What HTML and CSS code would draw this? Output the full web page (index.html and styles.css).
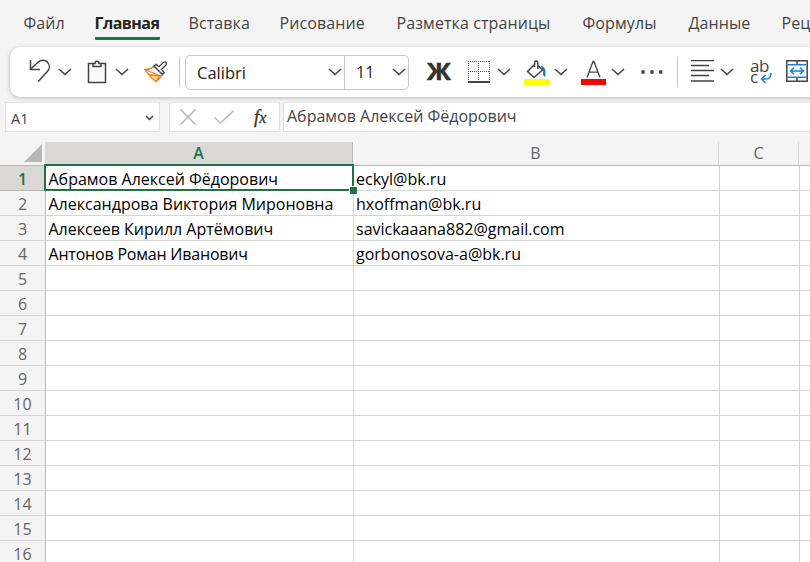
FILE: index.html
```html
<!DOCTYPE html>
<html lang="ru">
<head>
<meta charset="utf-8">
<title>Excel</title>
<link rel="stylesheet" href="styles.css">
</head>
<body>
<div class="app">
  <nav class="tabs">
    <span>Файл</span><span><b>Главная</b></span><span>Вставка</span><span>Рисование</span><span>Разметка страницы</span><span>Формулы</span><span>Данные</span><span>Рецензирование</span>
  </nav>

  <div class="ribbon">
    <svg class="undo" width="22" height="24" viewBox="0 0 22 24"><path d="M1.500 1v9.500H11M1.800 10 9 3.300C12 .6 16 .6 18.500 3.200c2.700 2.800 2.300 6.600-.2 9.300L9.200 22.500"/></svg>
    <svg class="chev" width="14" height="8" viewBox="0 0 14 8"><path d="m1 1 6 5.500L13 1"/></svg>
    <svg class="clip" width="20" height="24" viewBox="0 0 20 24"><path class="paper" d="M6 3.500H1.500v19h17v-19H14"/><path d="M6 6.500v-3h2C8 .5 12 .5 12 3.500h2v3z"/></svg>
    <svg class="chev" width="14" height="8" viewBox="0 0 14 8"><path d="m1 1 6 5.500L13 1"/></svg>
    <svg class="brush" width="24" height="22" viewBox="0 0 24 22"><path class="bristle" d="M1 8.500c4 .2 7-1 9-3.500l8.500 8.500c-1.500 2.500-3.500 5-6.500 7C9 18 4 14 1 8.500Z"/><path class="gold" d="m5 13.500 11 1.500-4 5.500C9 18.500 7 16.500 5 13.500Z"/><path class="edge" d="M1 8.500 16.500 15"/><path d="m10 5 8.500 8.500 1.700-2-2.700-3.300 4.500-4.200c1.300-2-.7-4-2.700-2.500L15 5.700l-3-2.500Z"/></svg>
    <i class="rule"></i>
    <div class="font-box">
      <div class="font-name"><span>Calibri</span><svg class="chev" width="14" height="8" viewBox="0 0 14 8"><path d="m1 1 6 5.500L13 1"/></svg></div>
      <div class="font-size"><span>11</span><svg class="chev" width="14" height="8" viewBox="0 0 14 8"><path d="m1 1 6 5.500L13 1"/></svg></div>
    </div>
    <b class="bold">Ж</b>
    <svg class="borders" width="22" height="22" viewBox="0 0 22 22"><path class="dots" d="M0 .5h22M0 10.500h22M.5 0v19M10.500 0v19M21.500 0v19"/><path class="base" d="M0 21h22"/></svg>
    <svg class="chev" width="14" height="8" viewBox="0 0 14 8"><path d="m1 1 6 5.500L13 1"/></svg>
    <svg class="fill" width="26" height="26" viewBox="0 0 26 26"><path fill="#ff0" stroke="none" d="M0 19h26v6H0z"/><path d="m11 4-7.500 7.500 6.500 6 8.500-7.500L13.500 5M10.500 7V3.500c0-3.300 3.300-3.300 3.300 0V9"/><path fill="#1a76bd" stroke="none" d="M16.500 6c4.500.2 5.800 4 4.700 11-2-1-2.600-3.500-2-6.500Z"/></svg>
    <svg class="chev" width="14" height="8" viewBox="0 0 14 8"><path d="m1 1 6 5.500L13 1"/></svg>
    <svg class="color" width="25" height="26" viewBox="0 0 25 26"><path fill="red" stroke="none" d="M0 19h25v6H0z"/><path d="m6 17.500 6-16h1l6 16M8 12.200h9"/></svg>
    <svg class="chev" width="14" height="8" viewBox="0 0 14 8"><path d="m1 1 6 5.500L13 1"/></svg>
    <svg class="more" width="22" height="4" viewBox="0 0 22 4"><circle cx="2" cy="2" r="1.900"/><circle cx="11" cy="2" r="1.900"/><circle cx="19.700" cy="2" r="1.900"/></svg>
    <i class="rule"></i>
    <svg class="align" width="24" height="22" viewBox="0 0 24 22"><path d="M0 .5h23M0 5.500h18M0 10.500h23M0 15.500h18M0 21h23"/></svg>
    <svg class="chev" width="14" height="8" viewBox="0 0 14 8"><path d="m1 1 6 5.500L13 1"/></svg>
    <div class="wrap"><span>ab</span><span>c<svg width="12" height="11" viewBox="0 0 12 11"><path d="M11 0c.2 4-2 6-5 6H1.500M5.500 2l-4 4 4 4"/></svg></span></div>
    <svg class="merge" width="22" height="22" viewBox="0 0 22 22"><path d="M.8.8h20.400v20.400H.8zM11 1v4M11 17v4"/><path class="blue" d="M1.500 4.700h19M1.500 17.300h19M4.500 11h13M8 7.800 4.500 11 8 14.200M14 7.800l3.500 3.200-3.500 3.200"/></svg>
  </div>

  <div class="formula">
    <div class="name-box"><span>A1</span><svg width="9" height="6" viewBox="0 0 9 6"><path d="m1 1 3.500 3.500L8 1"/></svg></div>
    <div class="actions">
      <svg width="16" height="16" viewBox="0 0 16 16"><path d="m.5.5 15 15M15.500.5l-15 15"/></svg>
      <svg width="20" height="14" viewBox="0 0 20 14"><path d="m.5 7.500 6 5.500L19.500.7"/></svg>
      <em>f<small>x</small></em>
    </div>
    <div class="value">Абрамов Алексей Фёдорович</div>
  </div>

  <div class="sheet">
    <div class="heads"><div class="corner"></div><div class="on">A</div><div>B</div><div>C</div><div></div></div>
    <div class="row on"><div>1</div><div class="selected">Абрамов Алексей Фёдорович</div><div>eckyl@bk.ru</div><div></div><div></div></div>
    <div class="row"><div>2</div><div>Александрова Виктория Мироновна</div><div>hxoffman@bk.ru</div><div></div><div></div></div>
    <div class="row"><div>3</div><div>Алексеев Кирилл Артёмович</div><div>savickaaana882@gmail.com</div><div></div><div></div></div>
    <div class="row"><div>4</div><div class="tight">Антонов Роман Иванович</div><div>gorbonosova-a@bk.ru</div><div></div><div></div></div>
    <div class="row"><div>5</div><div></div><div></div><div></div><div></div></div>
    <div class="row"><div>6</div><div></div><div></div><div></div><div></div></div>
    <div class="row"><div>7</div><div></div><div></div><div></div><div></div></div>
    <div class="row"><div>8</div><div></div><div></div><div></div><div></div></div>
    <div class="row"><div>9</div><div></div><div></div><div></div><div></div></div>
    <div class="row"><div>10</div><div></div><div></div><div></div><div></div></div>
    <div class="row"><div>11</div><div></div><div></div><div></div><div></div></div>
    <div class="row"><div>12</div><div></div><div></div><div></div><div></div></div>
    <div class="row"><div>13</div><div></div><div></div><div></div><div></div></div>
    <div class="row"><div>14</div><div></div><div></div><div></div><div></div></div>
    <div class="row"><div>15</div><div></div><div></div><div></div><div></div></div>
    <div class="row"><div>16</div><div></div><div></div><div></div><div></div></div>
  </div>
</div>
</body>
</html>
```
FILE: styles.css
```css
* { box-sizing: border-box; }
body { margin: 0; }
.app {
  width: 810px; height: 562px; overflow: hidden;
  background: #f4f4f4; color: #444;
  font: 16px "Open Sans", "Noto Sans", sans-serif;
}
svg { display: block; flex: none; fill: none; stroke: #444; stroke-width: 1.5; }

.tabs {
  display: grid; grid-template-columns: 71px 94px 91px 117px 186px 106px 93px 140px;
  height: 47px; padding-left: 23.500px; line-height: 46px; white-space: nowrap;
  letter-spacing: .1px;
}
.tabs b {
  display: inline-block; height: 40px; width: 65px;
  border-bottom: 3px solid #107c41; border-radius: 1px;
  color: #242424; font-weight: 700; letter-spacing: -.55px;
}

.ribbon {
  display: flex; align-items: center; width: 820px; height: 50px; margin-left: 10px; padding-left: 19px;
  background: #fff; border-radius: 10px 0 0 10px; box-shadow: 0 1px 4px rgba(0,0,0,.25);
}
.undo { margin: -2px 7px 0 0; }
.clip { margin: -1px 8px 0 15px; }
.paper { fill: #fafafa; }
.brush { margin-left: 15px; stroke-width: 1.3; }
.brush .bristle { fill: #fff; stroke: #e07a1c; }
.brush .gold { fill: #fbd58a; stroke: #e8851f; }
.brush .edge { stroke: #e07a1c; }
.brush path:last-child { fill: #fff; }
.rule { flex: none; width: 1px; height: 30px; margin-left: 11px; background: #c4c4c4; }
.font-box {
  display: flex; flex: none; width: 224px; height: 35px; margin-left: 5px;
  border: 1px solid #c8c8c8; border-radius: 5px; color: #222;
}
.font-name, .font-size { display: flex; align-items: center; justify-content: space-between; }
.font-name { width: 159px; padding: 0 2px 0 11px; border-right: 1px solid #c8c8c8; font-size: 16.500px; }
.font-size { width: 63px; padding: 0 2px 0 11px; }
.bold { width: 24px; margin-left: 18px; font-size: 24px; line-height: 34px; margin-top: -3px; transform: scaleX(1.05); transform-origin: 0 50%; -webkit-text-stroke: .6px #333; color: #333; }
.borders { margin: 0 7px 0 17px; stroke-width: 1; }
.dots { stroke: #555; stroke-dasharray: 1 1; }
.base { stroke-width: 2; }
.fill { margin: 1px 4px 0 13px; }
.color { margin: 1px 5px 0 13px; stroke-width: 1.300; }
.more { margin-left: 16px; fill: #444; stroke: none; }
.more + .rule { margin-left: 14px; }
.align { margin: -2px 5px 0 13px; stroke-width: 1.500; }
.wrap { flex: none; width: 22px; margin: 0 14px 0 16px; font-size: 17px; line-height: 11px; }
.wrap > span { display: flex; letter-spacing: -.5px; }
.wrap svg { margin: 2px 0 0 2px; }
.merge { margin-top: -2px; }
.wrap svg, .blue { stroke: #1a84cf; }

.formula { display: flex; height: 30px; margin-top: 5px; padding-left: 5px; }
.formula > div { background: #fff; border: 1px solid #e1e1e1; }
.name-box { display: flex; align-items: center; justify-content: space-between; width: 155px; padding: 2px 5px 0 5px; font-size: 14.500px; }
.actions { display: flex; align-items: center; width: 111px; margin-left: 9px; padding-left: 10px; }
.actions svg { margin-right: 18px; stroke: #b8b8b8; }
.actions em { font: italic 19px "Liberation Serif", serif; color: #333; -webkit-text-stroke: .3px #333; }
.actions small { font-size: 16px; }
.actions svg + svg { margin-right: 20px; }
.value { flex: 1; margin-left: 3px; padding-left: 3px; line-height: 26px; border-right: 0 !important; }

.sheet { width: 900px; margin-top: 10px; }
.heads, .row { display: grid; grid-template-columns: 46px 308px 366px 80px 100px; }
.heads { height: 24px; border-bottom: 1px solid #b8b8b8; line-height: 23px; color: #666; text-align: center; }
.heads > div { border-right: 1px solid #d8d8d8; transform: translateX(-1px); }
.heads > .corner { position: relative; border-color: transparent; }
.corner::after { content: ""; position: absolute; right: 2px; bottom: 3px; border: solid transparent; border-width: 0 0 18px 18px; border-bottom-color: #b7b7b7; }
.heads > .on { background: #d9d8d6; color: #217346; border-color: #b8b8b8; font-weight: 600; }
.row { height: 25px; grid-template-rows: 25px; }
.row > div { position: relative; padding-left: 2.500px; background: #fff; border: solid #d4d4d4; border-width: 0 1px 1px 0; line-height: 27px; color: #000; white-space: nowrap; }
.row > div:nth-child(3) { padding-left: 2px; }
.row > div:first-child { background: #f4f4f4; color: #666; text-align: center; padding: 0; border-right-color: #b8b8b8; }
.row.on > div:first-child { background: #d9d8d6; color: #217346; border-bottom-color: #b8b8b8; font-weight: 600; }
.row > .tight { letter-spacing: -.2px; }
.row > .selected { z-index: 1; }
.selected::before { content: ""; position: absolute; inset: -2px -1px -1px -2px; border: 2px solid #217346; }
.selected::after { content: ""; position: absolute; right: -4px; bottom: -4px; width: 7px; height: 7px; background: #217346; border: solid #fff; border-width: 1px 0 0 1px; }
```
